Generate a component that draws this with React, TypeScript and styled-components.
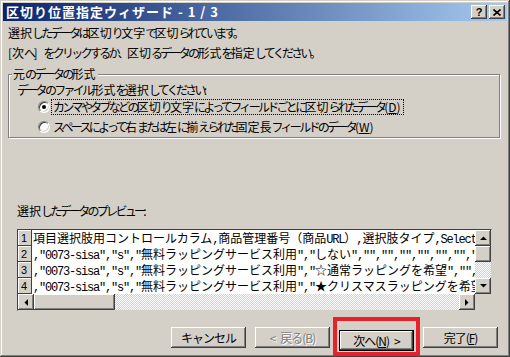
import React from "react";
import styled, { createGlobalStyle, css } from "styled-components";

const FACE = "#d4d0c8";

const GlobalStyle = createGlobalStyle`
  html, body {
    margin: 0;
    padding: 0;
    background: ${FACE};
  }
  body {
    font-family: "Noto Sans CJK JP", "Liberation Sans", sans-serif;
    color: #000;
  }
`;

const raised = css`
  background: ${FACE};
  box-shadow: inset -1px -1px #404040, inset 1px 1px #fff, inset -2px -2px #808080;
`;

const uiText = css`
  font-size: 12px;
  letter-spacing: 0;
  white-space: pre;
`;

const S = {
  Window: styled.div`
    width: 510px;
    height: 357px;
    box-sizing: border-box;
    padding: 3px;
    background: ${FACE};
    box-shadow: inset -1px -1px #404040, inset 1px 1px ${FACE}, inset -2px -2px #808080,
      inset 2px 2px #fff;
    display: flex;
    flex-direction: column;
  `,
  TitleBar: styled.div`
    height: 18px;
    display: flex;
    align-items: center;
    padding: 0 2px 0 3px;
    background: linear-gradient(to right, #0a246a, #a6caf0);
  `,
  Title: styled.span`
    color: #fff;
    font-weight: bold;
    font-size: 13px;
    letter-spacing: 1px;
    line-height: 18px;
    white-space: pre;
  `,
  TitleButtons: styled.div`
    margin-left: auto;
    display: flex;
    gap: 2px;
  `,
  TitleButton: styled.div`
    ${raised};
    width: 16px;
    height: 14px;
    display: flex;
    align-items: center;
    justify-content: center;
    font-family: "Liberation Sans", sans-serif;
    font-weight: bold;
    font-size: 11px;
    line-height: 14px;
  `,
  Content: styled.div`
    flex: 1;
    display: flex;
    flex-direction: column;
    padding: 2px 6px 0 5px;
  `,
  Message: styled.div`
    ${uiText};
    line-height: 20px;
  `,
  Kana: styled.span`
    letter-spacing: -2.7px;
  `,
  GroupBox: styled.div`
    position: relative;
    margin-top: 11px;
    width: 492px;
    height: 64px;
    box-sizing: border-box;
    border: 1px solid #808080;
    box-shadow: inset 1px 1px #fff, 1px 1px #fff;
    padding: 8px 0 0 8px;
  `,
  Legend: styled.span`
    ${uiText};
    position: absolute;
    top: -8px;
    left: 3px;
    padding: 0 2px 0 1px;
    background: ${FACE};
    line-height: 14px;
  `,
  GroupText: styled.div`
    ${uiText};
    line-height: 14px;
  `,
  RadioRow: styled.div`
    height: 20px;
    display: flex;
    align-items: center;
    gap: 2px;
    padding-left: 21px;
  `,
  Radio: styled.span<{ $checked?: boolean }>`
    position: relative;
    width: 12px;
    height: 12px;
    box-sizing: border-box;
    border-radius: 50%;
    background: #fff;
    border: 1px solid;
    border-color: #808080 #fff #fff #808080;
    box-shadow: inset 1px 1px #404040, inset -1px -1px ${FACE};
    &::after {
      content: "";
      display: ${(p) => (p.$checked ? "block" : "none")};
      position: absolute;
      left: 3px;
      top: 3px;
      width: 4px;
      height: 4px;
      border-radius: 50%;
      background: #000;
    }
  `,
  RadioLabel: styled.span<{ $focused?: boolean }>`
    ${uiText};
    line-height: 14px;
    padding: 0 2px 0 1px;
    outline: ${(p) => (p.$focused ? "1px dotted #000" : "none")};
  `,
  Key: styled.u`
    text-underline-offset: 1px;
  `,
  PreviewLabel: styled.div`
    ${uiText};
    margin-top: 65px;
    padding-left: 9px;
    line-height: 16px;
  `,
  PreviewBox: styled.div`
    margin: 10px 0 0 9px;
    width: 475px;
    height: 82px;
    box-sizing: border-box;
    border: 1px solid;
    border-color: #404040 ${FACE} ${FACE} #404040;
    display: grid;
    grid-template-columns: 457px 16px;
    grid-template-rows: 64px 16px;
  `,
  DataArea: styled.div`
    background: #fff;
    overflow: hidden;
  `,
  Row: styled.div`
    display: flex;
    height: 16px;
  `,
  RowNum: styled.div`
    flex: none;
    width: 14px;
    box-sizing: border-box;
    padding-left: 3px;
    background: ${FACE};
    border-right: 1px solid #404040;
    border-bottom: 1px solid #404040;
    box-shadow: inset 1px 1px #fff;
    font-family: "Liberation Sans", sans-serif;
    font-size: 11px;
    line-height: 17px;
  `,
  RowText: styled.div`
    padding-left: 1px;
    font-family: "Noto Sans CJK JP", sans-serif;
    font-size: 12px;
    line-height: 16px;
    white-space: pre;
  `,
  Half: styled.span`
    font-family: "Liberation Mono", monospace;
    font-size: 12px;
    letter-spacing: -1.2px;
  `,
  VScroll: styled.div`
    display: flex;
    flex-direction: column;
  `,
  HScroll: styled.div`
    display: flex;
  `,
  ArrowButton: styled.div`
    ${raised};
    flex: none;
    width: 16px;
    height: 16px;
    display: flex;
    align-items: center;
    justify-content: center;
  `,
  Thumb: styled.div<{ $size: number; $vertical?: boolean }>`
    ${raised};
    flex: none;
    ${(p) => (p.$vertical ? `height: ${p.$size}px;` : `width: ${p.$size}px;`)}
  `,
  Track: styled.div`
    flex: 1;
    background: repeating-conic-gradient(#fff 0 25%, ${FACE} 0 50%) 0 0 / 2px 2px;
  `,
  Corner: styled.div`
    background: ${FACE};
  `,
  ButtonRow: styled.div`
    margin-top: 16px;
    padding-right: 3px;
    display: flex;
    justify-content: flex-end;
    gap: 9px;
  `,
  ButtonWrap: styled.div`
    position: relative;
  `,
  Highlight: styled.span`
    position: absolute;
    top: -10px;
    left: -6px;
    right: -6px;
    bottom: -5px;
    border: 4px solid #e8202a;
    pointer-events: none;
  `,
  Button: styled.button<{ $default?: boolean }>`
    ${raised};
    width: 75px;
    height: 21px;
    padding: 0;
    border: none;
    font-family: "Noto Sans CJK JP", "Liberation Sans", sans-serif;
    font-size: 12px;
    letter-spacing: -1px;
    white-space: pre;
    color: #000;
    &:disabled {
      color: #808080;
      text-shadow: 1px 1px #fff;
    }
    ${(p) =>
      p.$default &&
      css`
        box-shadow: inset 0 0 0 1px #000, inset -2px -2px #404040, inset 2px 2px #fff,
          inset -3px -3px #808080;
      `}
  `,
};

// kana and kana punctuation are narrow in the dialog font, kanji take a full cell
const KANA = /([\u3040-\u30ff\u3001\u3002]+)/;

function Jp({ text }: { text: string }) {
  return (
    <>
      {text
        .split(KANA)
        .filter(Boolean)
        .map((part, i) =>
          /^[\u3040-\u30ff\u3001\u3002]+$/.test(part) ? (
            <S.Kana key={i}>{part}</S.Kana>
          ) : (
            <React.Fragment key={i}>{part}</React.Fragment>
          )
        )}
    </>
  );
}

function Arrow({ dir }: { dir: "up" | "down" | "left" | "right" }) {
  const vertical = dir === "up" || dir === "down";
  const points = {
    up: "0,4 3.5,0.5 7,4",
    down: "0,0 7,0 3.5,3.5",
    left: "4,0 4,7 0.5,3.5",
    right: "0,0 0,7 3.5,3.5",
  }[dir];
  return (
    <svg width={vertical ? 7 : 4} height={vertical ? 4 : 7} viewBox={vertical ? "0 0 7 4" : "0 0 4 7"}>
      <polygon points={points} fill="#000" />
    </svg>
  );
}

const rows = [
  "項目選択肢用コントロールカラム,商品管理番号（商品URL）,選択肢タイプ,Select",
  ',"0073-sisa","s","無料ラッピングサービス利用","しない","","","","","","",""',
  ',"0073-sisa","s","無料ラッピングサービス利用","☆通常ラッピングを希望","",""',
  ',"0073-sisa","s","無料ラッピングサービス利用","★クリスマスラッピングを希望",""',
];

// half-width runs get a monospace face so they take half a full-width cell
function PreviewText({ text }: { text: string }) {
  const parts = text.split(/([\x20-\x7e]+)/).filter(Boolean);
  return (
    <S.RowText>
      {parts.map((part, i) =>
        /^[\x20-\x7e]+$/.test(part) ? <S.Half key={i}>{part}</S.Half> : <span key={i}>{part}</span>
      )}
    </S.RowText>
  );
}

export default function App() {
  return (
    <>
      <GlobalStyle />
      <S.Window>
        <S.TitleBar>
          <S.Title>区切り位置指定ウィザード - 1 / 3</S.Title>
          <S.TitleButtons>
            <S.TitleButton>?</S.TitleButton>
            <S.TitleButton>
              <svg width="8" height="7" viewBox="0 0 8 7">
                <path d="M0.5 0.5 L7.5 6.5 M7.5 0.5 L0.5 6.5" stroke="#000" strokeWidth="1.6" />
              </svg>
            </S.TitleButton>
          </S.TitleButtons>
        </S.TitleBar>

        <S.Content>
          <S.Message>
            <Jp text="選択したデータは区切り文字で区切られています。" />
            <br />
            <Jp text={"[次へ]\u2002をクリックするか、区切るデータの形式を指定してください。"} />
          </S.Message>

          <S.GroupBox>
            <S.Legend>
              <Jp text="元のデータの形式" />
            </S.Legend>
            <S.GroupText>
              <Jp text="データのファイル形式を選択してください:" />
            </S.GroupText>
            <S.RadioRow>
              <S.Radio $checked />
              <S.RadioLabel $focused>
                <Jp text="カンマやタブなどの区切り文字によってフィールドごとに区切られたデータ" />(
                <S.Key>D</S.Key>)
              </S.RadioLabel>
            </S.RadioRow>
            <S.RadioRow>
              <S.Radio />
              <S.RadioLabel>
                <Jp text="スペースによって右または左に揃えられた固定長フィールドのデータ" />(
                <S.Key>W</S.Key>)
              </S.RadioLabel>
            </S.RadioRow>
          </S.GroupBox>

          <S.PreviewLabel>
            <Jp text="選択したデータのプレビュー:" />
          </S.PreviewLabel>

          <S.PreviewBox>
            <S.DataArea>
              {rows.map((text, i) => (
                <S.Row key={i}>
                  <S.RowNum>{i + 1}</S.RowNum>
                  <PreviewText text={text} />
                </S.Row>
              ))}
            </S.DataArea>
            <S.VScroll>
              <S.ArrowButton>
                <Arrow dir="up" />
              </S.ArrowButton>
              <S.Thumb $vertical $size={16} />
              <S.Track />
              <S.ArrowButton>
                <Arrow dir="down" />
              </S.ArrowButton>
            </S.VScroll>
            <S.HScroll>
              <S.ArrowButton>
                <Arrow dir="left" />
              </S.ArrowButton>
              <S.Thumb $size={81} />
              <S.Track />
              <S.ArrowButton>
                <Arrow dir="right" />
              </S.ArrowButton>
            </S.HScroll>
            <S.Corner />
          </S.PreviewBox>

          <S.ButtonRow>
            <S.Button>キャンセル</S.Button>
            <S.Button disabled>{"<\u2002戻る(B)"}</S.Button>
            <S.ButtonWrap>
              <S.Button $default>
                次へ(<S.Key>N</S.Key>){"\u2002>"}
              </S.Button>
              <S.Highlight />
            </S.ButtonWrap>
            <S.Button>
              完了(<S.Key>F</S.Key>)
            </S.Button>
          </S.ButtonRow>
        </S.Content>
      </S.Window>
    </>
  );
}
